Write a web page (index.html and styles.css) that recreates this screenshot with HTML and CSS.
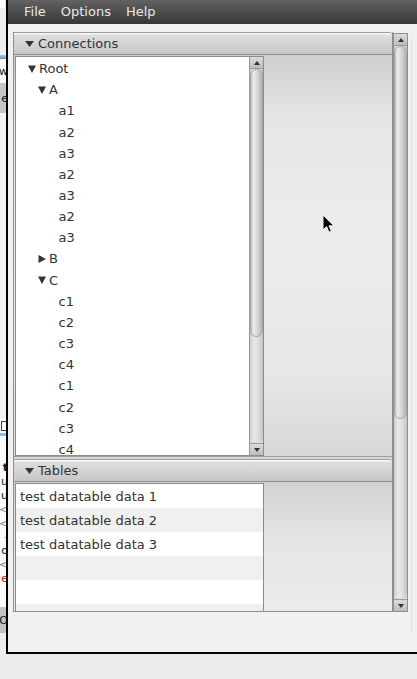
FILE: index.html
```html
<!DOCTYPE html>
<html>
<head>
<meta charset="utf-8">
<link rel="stylesheet" href="styles.css">
</head>
<body>
<div class="desktop">
  <div class="bgwin">
    <div class="bw s1"><span class="g dk">l</span></div>
    <div class="bw s2"></div>
    <div class="bw blue"></div>
    <div class="bw s4"><span class="g dk">w</span></div>
    <div class="bw grey"><span class="g dk">e</span></div>
    <div class="bw s6"></div>
    <div class="bw s7"><span class="box"></span></div>
    <div class="bw blue2"></div>
    <div class="bw sp1"></div>
    <div class="bw ln"><span class="g dk b">t</span></div>
    <div class="bw ln"><span class="g dk">u</span></div>
    <div class="bw ln"><span class="g dk">u</span></div>
    <div class="bw ln"><span class="g gr">&lt;</span></div>
    <div class="bw ln"><span class="g gr">&lt;</span></div>
    <div class="bw ln"><span class="g gr">-</span></div>
    <div class="bw ln"><span class="g dk">o</span></div>
    <div class="bw ln"><span class="g gr">&lt;</span></div>
    <div class="bw ln"><span class="g rd">e</span></div>
    <div class="bw sp2"></div>
    <div class="bw grey2"><span class="g dk">O</span></div>
    <div class="bw rest"></div>
  </div>
  <div class="window">
    <div class="menubar">
      <span class="menu">File</span>
      <span class="menu">Options</span>
      <span class="menu">Help</span>
    </div>
    <div class="main">
      <div class="split">
        <div class="section conn">
          <div class="hdr"><svg class="tri" viewBox="0 0 9 6"><path d="M0 0H9L4.5 6Z"/></svg><span>Connections</span></div>
          <div class="body">
            <div class="pane">
              <div class="tree">
                <div class="node l0"><svg class="tw" viewBox="0 0 8 8"><path d="M0 0.5H8L4 8Z"/></svg>Root</div>
                <div class="node l1"><svg class="tw" viewBox="0 0 8 8"><path d="M0 0.5H8L4 8Z"/></svg>A</div>
                <div class="node l2">a1</div>
                <div class="node l2">a2</div>
                <div class="node l2">a3</div>
                <div class="node l2">a2</div>
                <div class="node l2">a3</div>
                <div class="node l2">a2</div>
                <div class="node l2">a3</div>
                <div class="node l1"><svg class="tw" viewBox="0 0 8 8"><path d="M0.5 0V8L8 4Z"/></svg>B</div>
                <div class="node l1"><svg class="tw" viewBox="0 0 8 8"><path d="M0 0.5H8L4 8Z"/></svg>C</div>
                <div class="node l2">c1</div>
                <div class="node l2">c2</div>
                <div class="node l2">c3</div>
                <div class="node l2">c4</div>
                <div class="node l2">c1</div>
                <div class="node l2">c2</div>
                <div class="node l2">c3</div>
                <div class="node l2">c4</div>
              </div>
              <div class="vbar inner">
                <div class="btn up"></div>
                <div class="track"><div class="thumb"></div></div>
                <div class="btn down"></div>
              </div>
            </div>
          </div>
        </div>
        <div class="divider"></div>
        <div class="section tables">
          <div class="hdr"><svg class="tri" viewBox="0 0 9 6"><path d="M0 0H9L4.5 6Z"/></svg><span>Tables</span></div>
          <div class="body">
            <div class="pane table">
              <div class="row">test datatable data 1</div>
              <div class="row">test datatable data 2</div>
              <div class="row">test datatable data 3</div>
              <div class="row"></div>
              <div class="row"></div>
              <div class="row"></div>
            </div>
          </div>
        </div>
      </div>
      <div class="vbar outer">
        <div class="btn up"></div>
        <div class="track"><div class="thumb"></div></div>
        <div class="btn down"></div>
      </div>
      <div class="edge"></div>
    </div>
  </div>
</div>
<svg class="cursor" width="13" height="20" viewBox="0 0 13 20"><path d="M1 1V16L4.6 12.6L7 18.2L9.4 17.2L7 11.8H12Z" fill="#000" stroke="#f4f4f4" stroke-width="1" stroke-linejoin="round"/></svg>
</body>
</html>
```

FILE: styles.css
```css
* { box-sizing: border-box; }
html, body { margin: 0; padding: 0; }
body {
  width: 417px;
  height: 679px;
  overflow: hidden;
  position: relative;
  background: #edeceb;
  font-family: "DejaVu Sans", "Liberation Sans", sans-serif;
  font-size: 13px;
}
.desktop { display: flex; height: 654px; }

/* background window fragment */
.bgwin { width: 6px; flex: none; display: flex; flex-direction: column; background: #f3f3f3; overflow: hidden; }
.bw { flex: none; display: flex; justify-content: flex-end; align-items: center; overflow: hidden; }
.g { font-size: 11px; line-height: 1; margin-right: -2px; white-space: nowrap; }
.dk { color: #111; }
.gr { color: #888; }
.rd { color: #c01010; }
.b { font-weight: bold; }
.s1 { height: 8px; background: #fbfbfb; align-items: flex-start; }
.s2 { height: 47px; background: #eeeeee; }
.blue { height: 4px; background: linear-gradient(#a8c2e6, #5d8fd2); }
.s4 { height: 24px; background: #fbfbfb; }
.grey { height: 30px; background: #c6c6c6; }
.s6 { height: 305px; background: #f3f3f3; }
.s7 { height: 15px; background: #fbfbfb; }
.box { width: 8px; height: 10px; border: 1px solid #444; margin-right: -3px; }
.blue2 { height: 3px; background: #9ab8e0; }
.sp1 { height: 25px; background: #fbfbfb; }
.ln { height: 13.8px; background: #fbfbfb; }
.sp2 { height: 22px; background: #fbfbfb; }
.grey2 { height: 26px; background: #c4c4c4; }
.rest { flex: 1; background: #eeeeee; }

/* window */
.window {
  flex: 1;
  min-width: 0;
  display: flex;
  flex-direction: column;
  border-left: 2px solid #000;
  border-bottom: 2px solid #000;
  background: #f1f1f1;
}
.menubar {
  height: 24px;
  flex: none;
  display: flex;
  align-items: center;
  padding-left: 8.5px;
  background: linear-gradient(#626262, #373737);
}
.menu { padding: 0 7.5px; color: #e8e8e8; line-height: 24px; }

.main { flex: 1; display: flex; align-items: flex-start; padding: 8px 0 0 5px; }

.split {
  width: 380px;
  height: 580px;
  flex: none;
  display: flex;
  flex-direction: column;
  border: 1px solid #8e8e8e;
  border-top: none;
}
.section { display: flex; flex-direction: column; }
.conn { height: 424px; flex: none; }
.tables { flex: 1; min-height: 0; }

.hdr {
  height: 23px;
  flex: none;
  display: flex;
  align-items: center;
  padding-left: 11px;
  color: #333;
  border-top: 1px solid #9c9c9c;
  border-bottom: 1px solid #8e8e8e;
  border-top-right-radius: 3px;
  background: linear-gradient(#f8f8f8 0, #f8f8f8 1px, #dedede 2px, #c7c7c7 100%);
}
.tri { width: 9px; height: 6px; margin-right: 4px; fill: #333; flex: none; }

.body { flex: 1; min-height: 0; display: flex; align-items: flex-start; }
.conn .body {
  padding-top: 1px;
  background: linear-gradient(#cfcfcf 0%, #e6e6e6 16%, #ececec 45%, #e7e7e7 80%, #d8d8d8 100%);
}
.tables .body {
  background: linear-gradient(#d2d2d2 0%, #e5e5e5 45%, #ebebeb 100%);
}

.pane {
  width: 249px;
  margin-left: 1px;
  flex: none;
  display: flex;
  background: #fff;
  border: 1px solid #8c8c8c;
}
.conn .pane { height: 400px; }

.tree { flex: 1; min-width: 0; overflow: hidden; color: #333; padding-top: 1px; }
.node { height: 21.17px; display: flex; align-items: center; white-space: nowrap; }
.l0 { padding-left: 12px; }
.l1 { padding-left: 22px; }
.l2 { padding-left: 42.5px; }
.tw { width: 8px; height: 8px; margin-right: 3px; fill: #333; flex: none; }

/* scrollbars */
.vbar { display: flex; flex-direction: column; background: #dcdcdc; flex: none; }
.vbar.inner { width: 14px; border-left: 1px solid #9a9a9a; }
.vbar.outer { width: 15px; height: 579px; margin-top: 1px; border: 1px solid #8e8e8e; }
.btn {
  height: 12px;
  flex: none;
  display: flex;
  align-items: center;
  justify-content: center;
  background: linear-gradient(#dcdcdc, #bdbdbd);
  border-bottom: 1px solid #9a9a9a;
}
.btn.down { border-bottom: none; border-top: 1px solid #9a9a9a; }
.btn::after {
  content: "";
  border-left: 3.5px solid transparent;
  border-right: 3.5px solid transparent;
  border-bottom: 4px solid #333;
}
.btn.down::after { border-bottom: none; border-top: 4px solid #333; }
.track {
  flex: 1;
  display: flex;
  flex-direction: column;
  border-radius: 0 0 7px 7px;
  background: linear-gradient(90deg, #c9c9c9, #e9e9e9 30%, #dedede 65%, #c3c3c3);
}
.thumb {
  flex: none;
  border: 1px solid #a6a6a6;
  border-radius: 7px;
  background: linear-gradient(90deg, #c2c2c2, #ececec 25%, #d5d5d5 60%, #b2b2b2);
}
.inner .thumb { height: 268px; }
.outer .thumb { height: 373px; }

.edge { width: 1px; height: 597px; margin: 3px 0 0 3px; background: #e1e1e1; flex: none; }

.divider { height: 3px; flex: none; background: linear-gradient(#9e9e9e 0, #9e9e9e 1px, #d6d6d6 1px); }

/* table */
.table {
  margin-top: 1px;
  height: 128px;
  flex-direction: column;
  overflow: hidden;
  border-bottom: none;
}
.row { height: 24px; flex: none; display: flex; align-items: center; padding-left: 4px; color: #333; white-space: nowrap; }
.row:nth-child(even) { background: #f0f0f0; }

.cursor { position: absolute; left: 322px; top: 214px; }
```
